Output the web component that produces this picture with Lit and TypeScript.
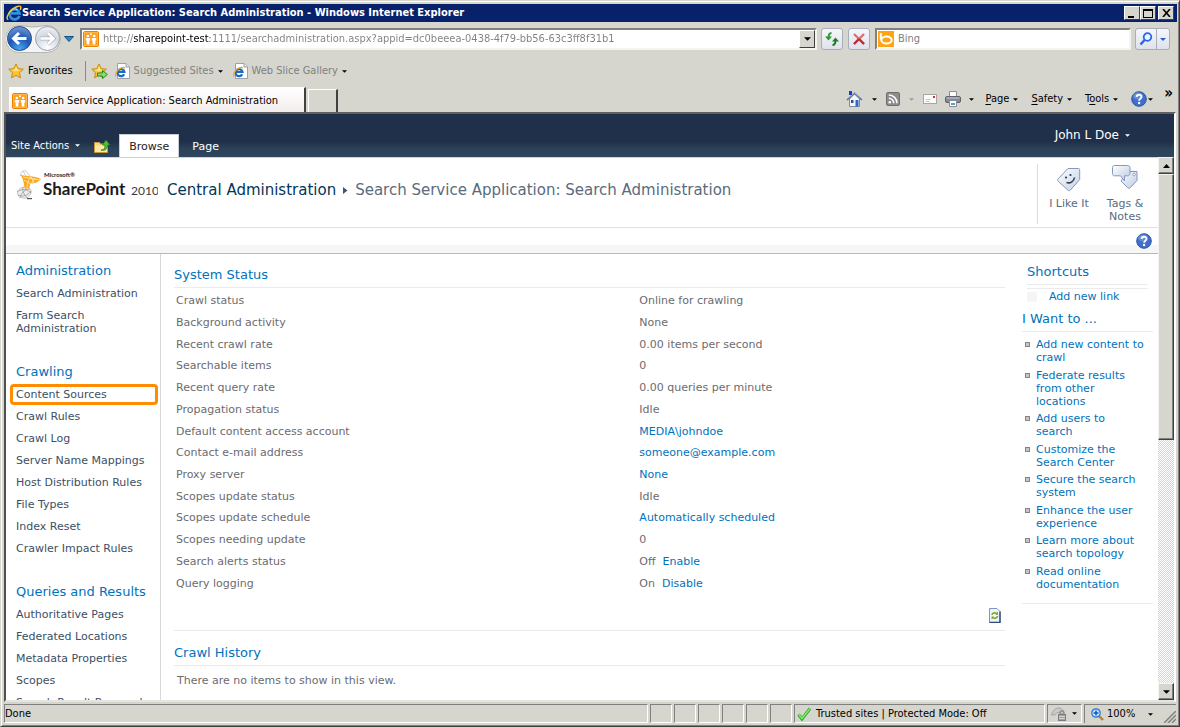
import { LitElement, html, css } from "lit";
import { customElement } from "lit/decorators.js";
import { classMap } from "lit/directives/class-map.js";

const ieGlyph = html`<svg width="16" height="16" viewBox="0 0 16 16" aria-hidden="true">
  <path d="M13.400 10.800A5 5 0 1 1 13.500 8.400H5" fill="none" stroke="#2f8fe0" stroke-width="2.800"/>
  <path d="M4.400 6.500A4.400 4.400 0 0 1 11.500 5" fill="none" stroke="#a6dcff" stroke-width="1.200"/>
  <path d="M2.400 14.600C-.6 14 2 8 6 4.600 9.500 1.600 14 .2 14.800 1.900c.3.800 0 1.800-.6 2.900" fill="none" stroke="#f5c83e" stroke-width="1.400"/>
</svg>`;

const iePage = html`<svg width="15" height="16" viewBox="0 0 15 16" aria-hidden="true">
  <path d="M2.500.5h8.500l3.500 3.500v11.500h-12z" fill="#fff" stroke="#9aa0ac"/>
  <path d="M11 .5V4h3.500" fill="#dde3ee" stroke="#9aa0ac"/>
  <path d="M9.200 11.200A3.500 3.500 0 1 1 9.500 9H3" fill="none" stroke="#1c6ac4" stroke-width="2.200"/>
  <path d="M.8 13.500C-.3 12 2 7 5.500 5.300c2-1 4-1.300 4.300 0" fill="none" stroke="#f0a818" stroke-width="1.200"/>
</svg>`;

const spTile = html`<svg width="16" height="16" viewBox="0 0 16 16" aria-hidden="true">
  <rect x=".5" y=".5" width="15" height="15" rx="1.500" fill="#ff9e1b" stroke="#f07f00"/>
  <rect x="1.500" y="1.500" width="13" height="13" fill="none" stroke="#ffc56e" stroke-width=".6"/>
  <g fill="#fff"><circle cx="4.800" cy="5" r="1.300"/><circle cx="11.200" cy="5" r="1.300"/><circle cx="8" cy="3.200" r="1"/>
  <path d="M2.800 7h4.400v2.500h-.8v4H3.600v-4h-.8zM8.800 7h4.400v2.500h-.8v4H9.600v-4h-.8z"/></g>
</svg>`;

const starPath = "M8 .9l2.200 4.700 5.100.6-3.800 3.500 1 5.200L8 12.300l-4.500 2.600 1-5.200L.7 6.200l5.100-.6z";
const star = html`<svg width="16" height="16" viewBox="0 0 16 16" aria-hidden="true">
  <path d=${starPath} fill="#fcc22f" stroke="#c98509" stroke-width=".9"/>
  <path d="M8 3l1.500 3.500 3 .4-5 1.600-4-1.500 3-.5z" fill="#ffe48a"/></svg>`;
const starAdd = html`<svg width="17" height="17" viewBox="0 0 17 17" aria-hidden="true">
  <path d=${starPath} fill="#fcc22f" stroke="#c98509" stroke-width=".9"/>
  <path d="M8 3l1.500 3.500 3 .4-5 1.600-4-1.500 3-.5z" fill="#ffe48a"/>
  <path d="M6.500 10h5V7.500l4.800 4-4.800 4V13h-5z" fill="#8be070" stroke="#1f8a1c"/></svg>`;

const caret = (fill = "#000", w = 5) => html`<svg class="caret" width=${w} height=${Math.ceil(w / 2)} viewBox="0 0 6 3" aria-hidden="true"><path d="M0 0h6L3 3z" fill=${fill}/></svg>`;

const helpBall = html`<svg width="16" height="16" viewBox="0 0 16 16" aria-hidden="true">
  <circle cx="8" cy="8" r="7.300" fill="#3f6fc8" stroke="#2c56a8"/>
  <ellipse cx="7" cy="5" rx="5" ry="3.500" fill="#7ba2e6" opacity=".6"/>
  <path d="M5.600 6.100C5.600 3 10.500 3 10.500 5.900 10.500 7.800 8.100 7.700 8.100 9.700" fill="none" stroke="#fff" stroke-width="1.800"/>
  <circle cx="8.100" cy="12" r="1.200" fill="#fff"/></svg>`;

const navButtons = html`<svg width="58" height="30" viewBox="0 0 58 30" aria-hidden="true">
  <defs>
    <radialGradient id="bk" cx=".5" cy=".95" r=".9"><stop offset="0" stop-color="#4aa8f2"/><stop offset=".55" stop-color="#1c55b4"/><stop offset="1" stop-color="#6d93cf"/></radialGradient>
    <radialGradient id="fw" cx=".5" cy=".9" r=".9"><stop offset="0" stop-color="#fff"/><stop offset=".6" stop-color="#d3d8e2"/><stop offset="1" stop-color="#f0f2f6"/></radialGradient>
  </defs>
  <path d="M13 1.500c6 0 8 1.500 14 1.500s9-1.500 14-1.500a13.500 13.500 0 0 1 0 27H13a13.500 13.500 0 0 1 0-27z" fill="#f4f4f4" stroke="#b4b4b0"/>
  <circle cx="13.500" cy="14.500" r="12" fill="url(#bk)" stroke="#204a92"/>
  <circle cx="41.500" cy="14.500" r="12" fill="url(#fw)" stroke="#9aa2b0"/>
  <path d="M20.500 14.500H8M13 9l-5.500 5.500L13 20" fill="none" stroke="#fff" stroke-width="3"/>
  <path d="M34.500 14.500H47M42 9l5.500 5.500L42 20" fill="none" stroke="#aab0bb" stroke-width="4"/>
  <path d="M34.500 14.500H47M42 9l5.500 5.500L42 20" fill="none" stroke="#fff" stroke-width="2.600"/>
</svg>`;

const refreshArrows = html`<svg width="16" height="16" viewBox="0 0 16 16" aria-hidden="true">
  <path d="M7.500 2C4.800 2 4.500 4 4.500 7" fill="none" stroke="#2d9a2d" stroke-width="2"/><path d="M1 5.500h7L4.500 9.500z" fill="#2d9a2d"/>
  <path d="M8.500 14c2.700 0 3-2 3-5" fill="none" stroke="#1f7d24" stroke-width="2"/><path d="M8 10.500h7l-3.500-4z" fill="#1f7d24"/></svg>`;
const stopCross = html`<svg width="14" height="14" viewBox="0 0 14 14" aria-hidden="true">
  <path d="M2 2l10 10M12 2L2 12" stroke="#e07070" stroke-width="2.400"/><path d="M7 7l5 5M7 7l-5 5" stroke="#b83030" stroke-width="2.200"/></svg>`;
const bingTile = html`<svg width="16" height="16" viewBox="0 0 16 16" aria-hidden="true"><rect width="16" height="16" fill="#ffa514"/>
  <path d="M2.800 2v6.500" stroke="#fff" stroke-width="2"/><ellipse cx="8.500" cy="9" rx="5.200" ry="3.500" fill="none" stroke="#fff" stroke-width="2"/></svg>`;
const magnifier = html`<svg width="14" height="14" viewBox="0 0 14 14" aria-hidden="true"><circle cx="8.500" cy="5" r="3.800" fill="#e9f2ff" stroke="#2a66e8" stroke-width="1.800"/><path d="M5.800 7.800L1.500 12.500" stroke="#2a66e8" stroke-width="2.400"/></svg>`;

const home = html`<svg width="17" height="17" viewBox="0 0 17 17" aria-hidden="true">
  <path d="M3.500 8v7.500h10V8l-5-5z" fill="#f4f7fc" stroke="#7b8aa8"/>
  <path d="M1 9l7.500-7L16 9" fill="none" stroke="#5c7196" stroke-width="1.600"/><path d="M2.800 6.500L8.500 1.500l5.700 5" fill="none" stroke="#a9bcdc"/>
  <rect x="3" y="0" width="3" height="4" fill="#2338c8"/><rect x="5" y="9" width="2.500" height="3" fill="#3b4f86"/><rect x="9.500" y="9" width="3" height="6.500" fill="#2d6ac0"/></svg>`;
const feed = html`<svg width="14" height="14" viewBox="0 0 14 14" aria-hidden="true"><rect x=".5" y=".5" width="13" height="13" rx="1.500" fill="#8c8c8c" stroke="#6f6f6f"/>
  <circle cx="3.800" cy="10.300" r="1.300" fill="#fff"/><path d="M2.800 6.200a5 5 0 0 1 5 5M2.800 3a8.200 8.200 0 0 1 8.200 8.200" fill="none" stroke="#fff" stroke-width="1.500"/></svg>`;
const mail = html`<svg width="14" height="10" viewBox="0 0 14 10" aria-hidden="true"><rect x=".5" y=".5" width="13" height="9" fill="#fbfbfb" stroke="#a6a6a6"/>
  <path d="M2.500 5.500h5M2.500 7.500h4" stroke="#c8c8c8"/><rect x="10" y="2" width="2" height="2" fill="#d8302c"/></svg>`;
const printer = html`<svg width="16" height="16" viewBox="0 0 16 16" aria-hidden="true"><path d="M4.500 6V.5h7V6" fill="#fff" stroke="#8d8d95"/>
  <rect x=".5" y="5.500" width="15" height="6" rx="1.500" fill="#888b94" stroke="#5f626c"/><path d="M1.500 7h13" stroke="#c9ccd4"/>
  <path d="M4.500 9.500h7v6h-7z" fill="#fff" stroke="#8d8d95"/><rect x="6" y="12" width="4" height="2" fill="#4aa6dc"/></svg>`;

const folderUp = html`<svg width="16" height="14" viewBox="0 0 16 14" aria-hidden="true"><path d="M.5 3.500h5l1 1.500h7v8.500H.5z" fill="#f6d878" stroke="#c79a35"/>
  <path d="M1 6.500h12v6.500H1z" fill="#fbe9a6"/><path d="M7 11c3.500 0 4-2 4-5H8.500L12 1l3.800 5h-2.300c0 4-2 6-6.500 5z" fill="#4fc43a" stroke="#22801c" stroke-width=".8"/></svg>`;

const spLogo = html`<svg width="144" height="42" viewBox="0 0 144 42" role="img" aria-label="Microsoft SharePoint 2010">
  <g transform="translate(1 4)">
    <g fill="none" stroke="#bdbdbd" stroke-width=".8">
      <path d="M6 8C5 4 8 2 11 3l4 5M8 3l3 5"/>
      <path d="M3 27c-2-4 2-8 7-8s7 3 6 6-3 6-8 5c-3-.5-4-1-5-3z" fill="#ececec"/>
      <path d="M2 24c4-3 9-4 14 1M5 30c1-5 5-9 10-9M3 27c5 2 9 1 13-4M8 19c-1 4 1 9 6 12" stroke="#9c9c9c"/>
    </g>
    <path d="M5 6.500C11 9 18 7 26 11c-3 4-7 4-11 5 0 3-1 5-4 5.500C8 19 10 12 5 6.500z" fill="#fba61f"/>
    <path d="M8 9l17 3M9 12l7 4M12 21c0-5 1-9 4-12M16 9l3 6M20 10l-4 6" stroke="#fff0b8" stroke-width=".8" fill="none"/>
    <path d="M12 30h5v1.200h-5z" fill="#555"/>
  </g>
  <text x="30" y="13" font-family="Lato, sans-serif" font-weight="700" font-size="6" fill="#222">Microsoft®</text>
  <text x="29" y="31" font-family="Lato, sans-serif" font-weight="700" font-size="17" fill="#1d1a1e">SharePoint</text>
  <text x="117" y="31" font-family="Lato, sans-serif" font-size="12" fill="#3a3a3a">2010</text>
</svg>`;

const likeTag = html`<svg width="28" height="28" viewBox="0 0 28 28" aria-hidden="true"><defs><linearGradient id="tg" x1="0" y1="0" x2="1" y2="1"><stop offset="0" stop-color="#fff"/><stop offset="1" stop-color="#c5d1e6"/></linearGradient></defs>
  <path d="M13 4.500h10.500c.8 0 1.200.4 1.200 1.200v9.800L15.500 26c-.8.900-1.800.9-2.600.1L3.300 17.300c-.8-.8-.8-1.800-.1-2.500z" fill="url(#tg)" stroke="#8398bd"/>
  <circle cx="11" cy="13.500" r="1.100" fill="#2e3f56"/><circle cx="15.500" cy="11" r="1.100" fill="#2e3f56"/><path d="M11.500 18.500c4 1.500 7.500-1.500 8-5" fill="none" stroke="#2e3f56" stroke-width="1.600"/></svg>`;
const tagsNotes = html`<svg width="28" height="28" viewBox="0 0 28 28" aria-hidden="true"><defs><linearGradient id="tn" x1="0" y1="0" x2="1" y2="1"><stop offset="0" stop-color="#fff"/><stop offset="1" stop-color="#bccae3"/></linearGradient></defs>
  <path d="M17 7.500h9v9l-6.500 7c-1 1-2 1-3 0L10 17z" fill="url(#tn)" stroke="#8398bd"/>
  <circle cx="23" cy="10.500" r="1.300" fill="#fff" stroke="#8398bd" stroke-width=".8"/>
  <path d="M3.500 1.500h13c1.500 0 2.500.8 2.500 2v6c0 1.300-1 2.300-2.500 2.300h-3v5.200l-4-5.200h-6C2 11.800 1.500 11 1.500 9.500v-6c0-1.200.7-2 2-2z" fill="url(#tn)" stroke="#8398bd"/></svg>`;

const refreshDoc = html`<svg width="12" height="15" viewBox="0 0 12 15" aria-hidden="true"><path d="M.5.5h7.500l3 3v11H.5z" fill="#eef4fb" stroke="#7e97bb"/><path d="M11 3.500v11H.5" fill="none" stroke="#2f4a78" stroke-width="1.400"/>
  <path d="M3 7c0-2 3-3 4.500-1.500M8.500 8c0 2-3 3-4.500 1.500" fill="none" stroke="#7da41e" stroke-width="1.500"/><path d="M6.500 6.500L8.800 3.500v3.500zM5 8.500l-2.500.2.300 2.800z" fill="#6a8f14"/></svg>`;

const check = html`<svg width="15" height="14" viewBox="0 0 15 14" aria-hidden="true"><path d="M1.500 7.500l3.500 4.500L13 1.500" fill="none" stroke="#2fa62c" stroke-width="3"/><path d="M1.800 7.500l3.200 4L12.800 1.800" fill="none" stroke="#7df06a" stroke-width="1.500"/></svg>`;
const lockIcon = html`<svg width="16" height="14" viewBox="0 0 16 14" aria-hidden="true"><path d="M.5 8c1-5 5-7.500 8-7 2.500.5 4 2.500 4.500 5l-3 1C9 4.500 5 5 4 8z" fill="#c9c9c9" stroke="#9a9a9a" stroke-width=".8"/>
  <path d="M9 7.500V6.200c0-3 4-3 4 0v1.300" fill="none" stroke="#8a8a8a" stroke-width="1.300"/><rect x="7.500" y="7.500" width="7" height="6" fill="#a3a3a3" stroke="#7c7c7c"/><path d="M8 9.500h6M8 11.500h6" stroke="#d2d2d2"/></svg>`;
const zoomIcon = html`<svg width="13" height="13" viewBox="0 0 13 13" aria-hidden="true"><path d="M7.500 7.500L12 12" stroke="#b5803a" stroke-width="2.400"/><circle cx="5" cy="5" r="4.200" fill="#cfe6ff" stroke="#2272d8" stroke-width="1.200"/><path d="M2.500 5h5M5 2.500v5" stroke="#1556c0" stroke-width="1.500"/></svg>`;

interface NavGroup { title: string; links: string[] }
const navGroups: NavGroup[] = [
  { title: "Administration", links: ["Search Administration", "Farm Search Administration"] },
  { title: "Crawling", links: ["Content Sources", "Crawl Rules", "Crawl Log", "Server Name Mappings", "Host Distribution Rules", "File Types", "Index Reset", "Crawler Impact Rules"] },
  { title: "Queries and Results", links: ["Authoritative Pages", "Federated Locations", "Metadata Properties", "Scopes", "Search Result Removal"] },
];

interface StatusRow { label: string; text?: string; link?: string }
const statusRows: StatusRow[] = [
  { label: "Crawl status", text: "Online for crawling" },
  { label: "Background activity", text: "None" },
  { label: "Recent crawl rate", text: "0.00 items per second" },
  { label: "Searchable items", text: "0" },
  { label: "Recent query rate", text: "0.00 queries per minute" },
  { label: "Propagation status", text: "Idle" },
  { label: "Default content access account", link: "MEDIA\\johndoe" },
  { label: "Contact e-mail address", link: "someone@example.com" },
  { label: "Proxy server", link: "None" },
  { label: "Scopes update status", text: "Idle" },
  { label: "Scopes update schedule", link: "Automatically scheduled" },
  { label: "Scopes needing update", text: "0" },
  { label: "Search alerts status", text: "Off", link: "Enable" },
  { label: "Query logging", text: "On", link: "Disable" },
];

const wants = ["Add new content to\ncrawl", "Federate results\nfrom other\nlocations", "Add users to\nsearch", "Customize the\nSearch Center",
  "Secure the search\nsystem", "Enhance the user\nexperience", "Learn more about\nsearch topology", "Read online\ndocumentation"];

const base = css`
  :host { display: block; min-width: 0; box-sizing: border-box; }
  *, *::before, *::after { box-sizing: border-box; }
  button { font: inherit; color: inherit; background: none; border: 0; padding: 0; margin: 0; }
  a { color: inherit; text-decoration: none; }
  svg { display: block; flex: none; }
  ul { list-style: none; margin: 0; padding: 0; }
  h1, h2, p { margin: 0; font-weight: normal; }
`;

@customElement("browser-chrome")
class BrowserChrome extends LitElement {
  static styles = [base, css`
    .title { display: flex; align-items: center; height: 18px; padding: 0 3px 0 2px; background: #08216b; color: #fff; font-weight: bold; }
    .title-text { flex: 1; white-space: nowrap; }
    .win { width: 16px; height: 14px; display: grid; place-items: center; background: #d6d6ce; border: 1px solid; border-color: #fff #404040 #404040 #fff; }
    .win:last-child { margin-left: 2px; }
    .nav { display: flex; align-items: center; height: 34px; padding: 0 7px 0 2px; }
    .box { display: flex; align-items: center; height: 22px; background: #fff; border: 2px solid; border-color: #808080 #f4f4f0 #f4f4f0 #808080; padding-left: 1px; gap: 4px; }
    .url { flex: 1; margin: 0 4px 0 6px; }
    input { flex: 1; min-width: 0; border: 0; padding: 0; margin: 0; font: inherit; outline: 0; background: transparent; color: #808080; }
    .address { color: transparent; background: linear-gradient(90deg, #808080 31px, #000 31px 107px, #808080 107px); -webkit-background-clip: text; background-clip: text; }
    .drop { width: 16px; height: 18px; display: grid; place-items: center; background: #d6d6ce; border: 1px solid; border-color: #fff #404040 #404040 #fff; }
    .glass { width: 22px; height: 22px; display: grid; place-items: center; border: 1px solid #a8adba; border-radius: 3px; background: linear-gradient(#f6f7fb, #dfe2ec); }
    .glass + .glass { margin-left: 5px; }
    .search { width: 256px; margin: 0 4px 0 5px; }
    .go { display: flex; }
    .go .glass:first-child { border-radius: 3px 0 0 3px; }
    .go .glass:last-child { width: 14px; margin-left: -1px; border-radius: 0 3px 3px 0; }
    .favs { display: flex; align-items: center; height: 30px; padding: 0 4px; color: #808080; }
    .favs button { display: flex; align-items: center; gap: 4px; height: 16px; }
    .favs .fav { color: #000; padding-right: 12px; }
    .favs .sep { width: 1px; height: 20px; background: #8a8a84; margin-right: 5px; }
    .favs .add { margin-right: 7px; }
    .favs .site { margin-right: 10px; }
    .row { display: flex; align-items: flex-end; height: 26px; padding: 0 4px 0 5px; }
    .tab { display: flex; align-items: center; gap: 2px; width: 297px; height: 25px; padding: 1px 2px 0; text-align: left; background: linear-gradient(#fff, #f3eded); border: 1px solid #fff; border-right: 2px solid #404040; border-bottom: 0; }
    .newtab { width: 30px; height: 23px; margin-left: 2px; border: 1px solid #fff; border-right: 2px solid #404040; border-bottom: 0; }
    .tools { display: flex; flex: 1; align-items: center; justify-content: flex-end; align-self: center; }
    .tools button { display: flex; align-items: center; height: 18px; gap: 4px; }
    .tools .wide { gap: 9px; margin-right: 9px; }
    .tools .mail { margin-right: 8px; }
    .tools .menu { margin-right: 13px; }
    .tools .print { gap: 8px; margin-right: 11px; }
    .tools .help { gap: 1px; }
    .tools .more { margin-left: 11px; align-items: flex-start; font-weight: bold; font-size: 15px; line-height: 6px; }
    u { text-decoration: underline; text-underline-offset: 2px; }
  `];
  render() {
    return html`
      <header class="title">${ieGlyph}<span class="title-text">Search Service Application: Search Administration - Windows Internet Explorer</span>
        <button class="win" aria-label="Minimize"><svg width="10" height="9" viewBox="0 0 10 9"><path d="M1 8h6" stroke="#000" stroke-width="2"/></svg></button>
        <button class="win" aria-label="Maximize"><svg width="10" height="9" viewBox="0 0 10 9"><path d="M.5 1h9M.5 0v9M9.500 0v9M0 8.500h10" stroke="#000" fill="none"/><path d="M0 1h10" stroke="#000" stroke-width="2"/></svg></button>
        <button class="win" aria-label="Close"><svg width="9" height="8" viewBox="0 0 9 8"><path d="M1 0l7 8M8 0L1 8" stroke="#000" stroke-width="1.600"/></svg></button>
      </header>
      <nav class="nav" aria-label="Navigation">
        <button aria-label="Back and forward">${navButtons}</button>
        <button aria-label="Recent pages"><svg width="10" height="6" viewBox="0 0 10 6"><path d="M.5.5h9L5 5.500z" fill="#2f86c8" stroke="#174f86"/></svg></button>
        <div class="box url">${spTile}<input class="address" aria-label="Address" value="http://sharepoint-test:1111/searchadministration.aspx?appid=dc0beeea-0438-4f79-bb56-63c3ff8f31b1">
          <button class="drop" aria-label="Show address list">${caret("#000", 7)}</button></div>
        <button class="glass" aria-label="Refresh">${refreshArrows}</button>
        <button class="glass" aria-label="Stop">${stopCross}</button>
        <div class="box search">${bingTile}<input aria-label="Search" value="Bing"></div>
        <div class="go"><button class="glass" aria-label="Search">${magnifier}</button><button class="glass" aria-label="Search options">${caret("#1d5fd6", 6)}</button></div>
      </nav>
      <div class="favs">
        <button class="fav">${star}Favorites</button><span class="sep"></span>
        <button class="add" aria-label="Add to favorites bar">${starAdd}</button>
        <button class="site">${iePage}Suggested Sites ${caret()}</button>
        <button class="site">${iePage}Web Slice Gallery ${caret()}</button>
      </div>
      <div class="row">
        <button class="tab">${spTile}Search Service Application: Search Administration</button>
        <button class="newtab" aria-label="New tab"></button>
        <div class="tools">
          <button class="wide" aria-label="Home">${home}${caret()}</button>
          <button class="wide" aria-label="Feeds">${feed}${caret("#999")}</button>
          <button class="mail" aria-label="Read mail">${mail}</button>
          <button class="print" aria-label="Print">${printer}${caret()}</button>
          <button class="menu"><span><u>P</u>age</span>${caret()}</button>
          <button class="menu"><span><u>S</u>afety</span>${caret()}</button>
          <button class="menu"><span>T<u>o</u>ols</span>${caret()}</button>
          <button class="help" aria-label="Help">${helpBall}${caret()}</button>
          <button class="more" aria-label="More">»</button>
        </div>
      </div>`;
  }
}

@customElement("side-nav")
class SideNav extends LitElement {
  static styles = [base, css`
    :host { padding: 9px 0 0 4px; border-right: 1px solid #d8d8d8; color: #3b4f65; overflow: hidden; }
    .group { margin-bottom: 24px; }
    h2 { padding: 0 6px; font-size: 13px; line-height: 16px; color: #0072bc; margin-bottom: 4px; white-space: nowrap; }
    .link { display: block; padding: 4px 4px; line-height: 13px; border: 1px solid transparent; border-width: 0 2px 1px; }
    .link.marked { border: 3px solid #ff8c00; border-radius: 4px; padding: 1px 3px 2px; margin: 0 2px 1px 0; height: 21px; }
  `];
  render() {
    return html`<nav aria-label="Quick launch">${navGroups.map(g => html`<section class="group"><h2>${g.title}</h2>
      <ul>${g.links.map(l => html`<li><a href="#" class=${classMap({ link: true, marked: l === "Content Sources" })}>${l}</a></li>`)}</ul></section>`)}</nav>`;
  }
}

@customElement("status-panel")
class StatusPanel extends LitElement {
  static styles = [base, css`
    :host { padding: 9px 17px 0 13px; color: #6b6b70; }
    h2 { font-size: 13px; line-height: 24px; color: #0072bc; border-bottom: 1px solid #ebebeb; }
    table { width: 100%; height: 304px; margin-top: 2px; border-collapse: collapse; table-layout: fixed; }
    th, td { padding: 0 2px; text-align: left; font-weight: normal; line-height: 13px; }
    th { width: 56%; }
    td { padding-left: 0; }
    a { color: #0072bc; }
    .text + a { margin-left: 7px; }
    .refresh { display: flex; justify-content: flex-end; padding: 14px 4px 7px; border-bottom: 1px solid #ebebeb; margin-bottom: 10px; }
    .empty { padding: 8px 3px; line-height: 13px; }
  `];
  render() {
    return html`<h2>System Status</h2>
      <table><tbody>${statusRows.map(r => html`<tr><th scope="row">${r.label}</th><td>${r.text ? html`<span class="text">${r.text}</span>` : ""}${r.link ? html`<a href="#">${r.link}</a>` : ""}</td></tr>`)}</tbody></table>
      <div class="refresh"><button aria-label="Refresh">${refreshDoc}</button></div>
      <h2>Crawl History</h2>
      <p class="empty">There are no items to show in this view.</p>`;
  }
}

@customElement("shortcut-panel")
class ShortcutPanel extends LitElement {
  static styles = [base, css`
    :host { padding: 8px 5px 0 0; color: #0072bc; }
    h2 { font-size: 13px; line-height: 20px; }
    .short { margin: 0 5px; }
    .rules { height: 5px; margin-top: 2px; border: 1px solid #ebebeb; border-width: 1px 0; }
    .add { display: flex; align-items: center; gap: 12px; height: 15px; line-height: 13px; }
    .blank { width: 10px; height: 10px; background: #f5f5f8; }
    .want { padding: 5px 0 2px; border-bottom: 1px solid #ebebeb; }
    ul { display: flex; flex-direction: column; justify-content: space-between; min-height: 272px; padding: 6px 2px 12px 3px; border-bottom: 1px solid #ebebeb; }
    li { display: flex; gap: 6px; line-height: 13px; white-space: pre-line; }
    li::before { content: ""; flex: none; width: 5px; height: 5px; margin-top: 4px; background: #c4c4c4; outline: 1px solid #858585; outline-offset: -1px; }
  `];
  render() {
    return html`<div class="short"><h2>Shortcuts</h2><div class="rules"></div>
      <div class="add"><span class="blank"></span><a href="#">Add new link</a></div></div>
      <h2 class="want">I Want to ...</h2>
      <ul>${wants.map(w => html`<li><a href="#">${w}</a></li>`)}</ul>`;
  }
}

@customElement("app-root")
class AppRoot extends LitElement {
  static styles = [base, css`
    :host { display: flex; flex-direction: column; height: 100vh; overflow: hidden; padding: 2px; background: #d6d6ce; color: #000;
      font: 11px/14px "DejaVu Sans Condensed", "DejaVu Sans", sans-serif; border: 1px solid; border-color: #d6d6ce #404040 #404040 #d6d6ce; box-shadow: inset 1px 1px #fff, inset -1px -1px #808080; }
    browser-chrome { margin: 1px 0 0 1px; }
    .client { flex: 1; min-height: 0; display: flex; flex-direction: column; margin: 0 1px; background: #fff; border: 2px solid; border-color: #606060 #fff #e4e4e0 #505050;
      font: 11px/13px "DejaVu Sans", sans-serif; }
    .ribbon { display: flex; align-items: flex-end; height: 43px; flex: none; padding-left: 5px; color: #fff; background: linear-gradient(#21304a 65%, #2a4257 80%, #2f4560); }
    .ribbon button { display: flex; align-items: center; }
    .actions { gap: 6px; padding-bottom: 5px; font-family: "DejaVu Sans Condensed", "DejaVu Sans", sans-serif; }
    .up { margin: 0 9px 4px 14px; }
    .rtab { height: 22px; padding: 0 11px; }
    .rtab.on { height: 23px; background: #fff; color: #222; border: 1px solid #c9ced6; border-bottom: 0; padding: 0 9px; margin-right: 2px; }
    .person { margin-left: auto; padding: 0 44px 15px 0; gap: 6px; font-size: 12px; }
    .view { flex: 1; min-height: 0; display: flex; }
    .page { flex: 1; min-width: 0; display: flex; flex-direction: column; overflow: hidden; border-top: 1px solid #cfd3dc; }
    .head { display: flex; height: 70px; flex: none; border-bottom: 1px solid #e1e1e1; padding: 6px 5px 3px 8px; }
    .crumb { display: flex; flex: 1; gap: 7px; height: 52px; align-items: center; margin-left: 9px; font-size: 15px; line-height: 20px; color: #5b6b7c; white-space: nowrap; }
    .crumb a { color: #003759; }
    .social { display: flex; border-left: 1px solid #dcdcdc; padding-left: 3px; color: #596b80; }
    .social button { display: flex; flex-direction: column; align-items: center; gap: 5px; width: 56px; line-height: 13px; }
    .strip { display: flex; justify-content: flex-end; height: 26px; flex: none; padding: 5px 6px 0; background: linear-gradient(#fff 17px, #f6f6f6 17px); border-bottom: 1px solid #b9b9b9; }
    .strip button { align-self: flex-start; }
    .cols { flex: 1; min-height: 0; display: grid; grid-template-columns: 155px minmax(0, 1fr) 136px; }
    .scroll { display: flex; flex-direction: column; width: 16px; flex: none; background: repeating-conic-gradient(#fff 0 25%, #d6d6ce 0 50%) 0 0 / 2px 2px; }
    .scroll button, .thumb { background: #d6d6ce; border: 1px solid; border-color: #f4f4f0 #404040 #404040 #f4f4f0; box-shadow: inset -1px -1px #808080; }
    .scroll button { height: 17px; display: grid; place-items: center; flex: none; }
    .thumb { flex: 52 1 0; }
    .rest { flex: 48 1 0; }
    .status { display: flex; height: 22px; flex: none; gap: 2px; padding: 2px 1px 1px; }
    .pane { display: flex; align-items: center; width: 22px; border: 1px solid; border-color: #808080 #fff #fff #808080; white-space: nowrap; }
    .done { flex: 1; }
    .trust { width: 251px; gap: 4px; padding-left: 2px; }
    .lock { width: 35px; gap: 5px; padding-left: 3px; }
    .zoom { width: 92px; gap: 3px; padding-left: 6px; border-right: 0; border-bottom: 0; }
    .zoom .caret { margin-left: 10px; }
    .grip { margin: 5px 0 0 auto; }
  `];
  render() {
    return html`
      <browser-chrome></browser-chrome>
      <div class="client">
        <div class="ribbon">
          <button class="actions">Site Actions ${caret("#fff")}</button>
          <button class="up" aria-label="Navigate up">${folderUp}</button>
          <button class="rtab on">Browse</button><button class="rtab">Page</button>
          <button class="person">John L Doe ${caret("#fff")}</button>
        </div>
        <div class="view">
          <main class="page">
            <div class="head">${spLogo}
              <h1 class="crumb"><a href="#">Central Administration</a><svg width="5" height="7" viewBox="0 0 5 7" aria-hidden="true"><path d="M0 0l4.500 3.500L0 7z" fill="#3f5570"/></svg><span>Search Service Application: Search Administration</span></h1>
              <div class="social"><button>${likeTag}I Like It</button><button>${tagsNotes}Tags &amp; Notes</button></div>
            </div>
            <div class="strip"><button aria-label="Help">${helpBall}</button></div>
            <div class="cols"><side-nav></side-nav><status-panel></status-panel><shortcut-panel></shortcut-panel></div>
          </main>
          <div class="scroll">
            <button aria-label="Scroll up"><svg width="7" height="4" viewBox="0 0 7 4"><path d="M0 4h7L3.500 0z"/></svg></button>
            <div class="thumb"></div><div class="rest"></div>
            <button aria-label="Scroll down">${caret("#000", 7)}</button>
          </div>
        </div>
      </div>
      <footer class="status">
        <div class="pane done">Done</div>
        ${[1, 2, 3, 4, 5, 6].map(() => html`<div class="pane"></div>`)}
        <div class="pane trust">${check}Trusted sites | Protected Mode: Off</div>
        <button class="pane lock" aria-label="Privacy">${lockIcon}${caret()}</button>
        <button class="pane zoom">${zoomIcon}100% ${caret()}<svg class="grip" width="12" height="12" viewBox="0 0 12 12" aria-hidden="true"><path d="M0 12L12 0M4 12l8-8M8 12l4-4" stroke="#808080" stroke-width="1.500"/></svg></button>
      </footer>`;
  }
}
